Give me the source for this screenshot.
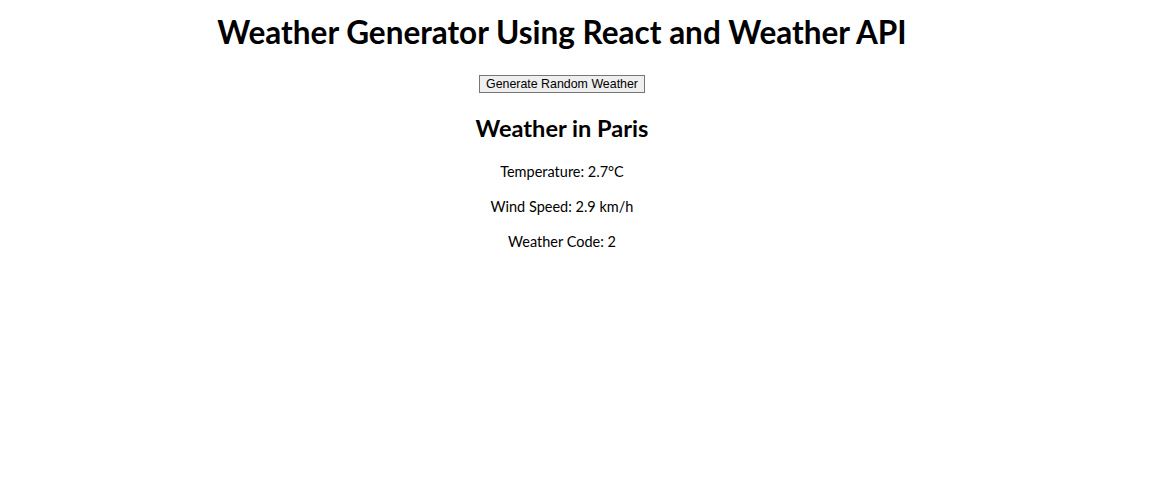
export default function App() {
  return (
    <div className="w-[1124px] text-center text-black font-['Lato',sans-serif]">
      <h1 className="text-[31.5px] font-bold leading-[40px] pt-[12px] mb-[18px]">
        Weather Generator Using React and Weather API
      </h1>
      <button className="font-['Liberation_Sans',Arial,sans-serif] text-[12.4px] leading-[14px] px-[6px] py-[1px] border border-[#767676] bg-[#efefef] text-black">
        Generate Random Weather
      </button>
      <div>
        <h2 className="text-[23.6px] font-bold leading-[30px] mt-[19px] mb-[18px]">Weather in Paris</h2>
        <p className="text-[14.5px] leading-[21px] mb-[14px]">Temperature: 2.7°C</p>
        <p className="text-[14.5px] leading-[21px] mb-[14px]">Wind Speed: 2.9 km/h</p>
        <p className="text-[14.5px] leading-[21px] mb-[14px]">Weather Code: 2</p>
      </div>
    </div>
  );
}
